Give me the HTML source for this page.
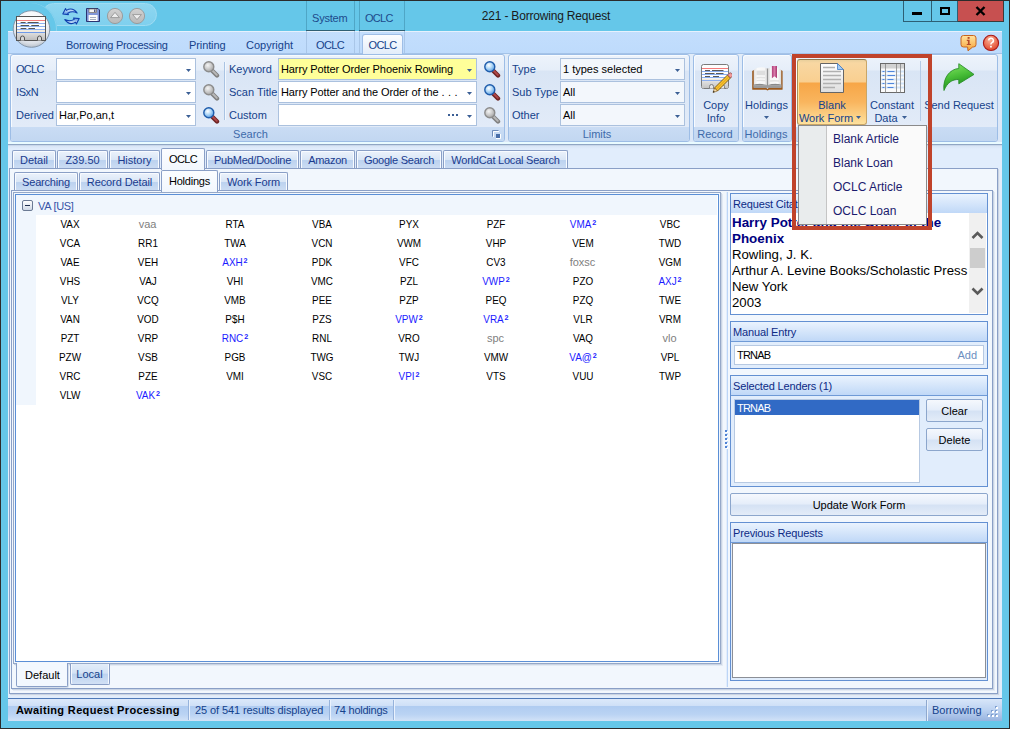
<!DOCTYPE html>
<html><head><meta charset="utf-8"><style>
html,body{margin:0;padding:0;width:1010px;height:729px;overflow:hidden;font-family:'Liberation Sans', sans-serif;}
</style></head><body>
<div style="position:absolute;left:0px;top:0px;width:1010px;height:729px;background:#2b2b2b"></div><div style="position:absolute;left:1px;top:1px;width:1008px;height:727px;background:#65c7e9"></div><div style="position:absolute;left:42px;top:3px;width:115px;height:23px;background:linear-gradient(#8ed6f0,#7fd0ee);border:1px solid #9fdcf2;border-radius:12px;box-sizing:border-box"></div><div style="position:absolute;left:5px;top:3px;width:52px;height:52px;border-radius:50%;background:#65c7e9;box-shadow:inset -1px 0 0 #8ad3ee"></div><svg style="position:absolute;left:62px;top:7px" width="18" height="18" viewBox="0 0 18 18">
<defs><linearGradient id="rg" x1="0" y1="0" x2="0" y2="1"><stop offset="0" stop-color="#e8f4ff"/><stop offset="1" stop-color="#4f8fe0"/></linearGradient></defs>
<g id="ra"><path d="M0.8 7 L3.6 1.6 L4.4 3.4 C8 1.2 12 1.8 15.2 6 C12 4.4 8.5 4.6 5.8 6.2 L6.4 7.6 Z" fill="url(#rg)" stroke="#0f3fae" stroke-width="1.1" stroke-linejoin="round"/></g>
<g transform="rotate(180 9 9.3)"><path d="M0.8 7 L3.6 1.6 L4.4 3.4 C8 1.2 12 1.8 15.2 6 C12 4.4 8.5 4.6 5.8 6.2 L6.4 7.6 Z" fill="url(#rg)" stroke="#0f3fae" stroke-width="1.1" stroke-linejoin="round"/></g>
</svg><svg style="position:absolute;left:86px;top:8px" width="14" height="14" viewBox="0 0 14 14">
<path d="M0.5 0.5 H12 L13.5 2 V13.5 H0.5 Z" fill="#8196d8" stroke="#2a3470"/>
<rect x="3" y="1" width="7.5" height="3.6" fill="#f4f4f4" stroke="#6b5e4a" stroke-width="0.6"/>
<rect x="8.2" y="1.5" width="1.2" height="2.5" fill="#2a3470"/>
<rect x="2.6" y="7" width="9" height="6" fill="#fbfbfb"/>
<path d="M4 9.5h6M4 11.5h6" stroke="#9aa4b8" stroke-width="0.9"/>
</svg><svg style="position:absolute;left:106px;top:7px" width="18" height="18" viewBox="0 0 18 18"><defs><linearGradient id="qg" x1="0" y1="0" x2="0" y2="1"><stop offset="0" stop-color="#d2d2d2"/><stop offset="1" stop-color="#b8b8b8"/></linearGradient></defs><circle cx="9" cy="9" r="7.6" fill="url(#qg)" stroke="#979797" stroke-width="0.9"/><path d="M4.6 10.6 L9 5.4 L13.4 10.6 Z" fill="#ededed" stroke="#8e8e8e" stroke-width="0.8" stroke-linejoin="round"/></svg><svg style="position:absolute;left:128px;top:7px" width="18" height="18" viewBox="0 0 18 18"><circle cx="9" cy="9" r="7.6" fill="url(#qg)" stroke="#979797" stroke-width="0.9"/><path d="M4.6 7.6 L9 12.6 L13.4 7.6 Z" fill="#ededed" stroke="#8e8e8e" stroke-width="0.8" stroke-linejoin="round"/></svg><div style="position:absolute;left:446.0px;top:7px;height:18px;line-height:18px;font-size:12px;color:#1a1a1a;font-weight:400;white-space:nowrap;letter-spacing:-0.19px;width:200px;text-align:center;">221 - Borrowing Request</div><div style="position:absolute;left:306px;top:1px;width:1px;height:52px;background:#4fa6c6"></div><div style="position:absolute;left:354px;top:1px;width:1px;height:52px;background:#4fa6c6"></div><div style="position:absolute;left:306px;top:30px;width:49px;height:1px;background:#2f5f73"></div><div style="position:absolute;left:312px;top:10px;height:17px;line-height:17px;font-size:11px;color:#1d4a8c;font-weight:400;white-space:nowrap;letter-spacing:-0.2px;">System</div><div style="position:absolute;left:359px;top:1px;width:1px;height:52px;background:#4fa6c6"></div><div style="position:absolute;left:404px;top:1px;width:1px;height:52px;background:#4fa6c6"></div><div style="position:absolute;left:359px;top:30px;width:46px;height:1px;background:#2f5f73"></div><div style="position:absolute;left:365px;top:10px;height:17px;line-height:17px;font-size:11px;color:#1d4a8c;font-weight:400;white-space:nowrap;letter-spacing:-0.7px;">OCLC</div><div style="position:absolute;left:903px;top:1px;width:101px;height:21px;border:1px solid #2d5f74;border-top:none;box-sizing:border-box;background:#65c7e9"></div><div style="position:absolute;left:931px;top:1px;width:1px;height:20px;background:#2d5f74"></div><div style="position:absolute;left:957px;top:1px;width:47px;height:21px;background:#c75050;border:1px solid #3a3a3a;border-top:none;border-left:1px solid #2d5f74;box-sizing:border-box"></div><div style="position:absolute;left:912px;top:12px;width:10px;height:3px;background:#000"></div><div style="position:absolute;left:940px;top:7px;width:10px;height:8px;border:2px solid #000;box-sizing:border-box"></div><svg style="position:absolute;left:975px;top:6px" width="11" height="10" viewBox="0 0 11 10"><path d="M1.5 1 L9.5 9 M9.5 1 L1.5 9" stroke="#000" stroke-width="2.4"/></svg><div style="position:absolute;left:8px;top:31px;width:994px;height:23px;background:linear-gradient(#c3defd,#bedbfc)"></div><div style="position:absolute;left:8px;top:31px;width:994px;height:1px;background:#e6f1fd"></div><div style="position:absolute;left:8px;top:53px;width:994px;height:1px;background:#a4c3e8"></div><div style="position:absolute;left:306px;top:31px;width:1px;height:22px;background:#a9c6e8"></div><div style="position:absolute;left:354px;top:31px;width:1px;height:22px;background:#a9c6e8"></div><div style="position:absolute;left:359px;top:31px;width:1px;height:22px;background:#a9c6e8"></div><div style="position:absolute;left:404px;top:31px;width:1px;height:22px;background:#a9c6e8"></div><div style="position:absolute;left:66px;top:37px;height:17px;line-height:17px;font-size:11px;color:#15428b;font-weight:400;white-space:nowrap;letter-spacing:-0.27px;">Borrowing Processing</div><div style="position:absolute;left:189px;top:37px;height:17px;line-height:17px;font-size:11px;color:#15428b;font-weight:400;white-space:nowrap;letter-spacing:-0.1px;">Printing</div><div style="position:absolute;left:246px;top:37px;height:17px;line-height:17px;font-size:11px;color:#15428b;font-weight:400;white-space:nowrap;">Copyright</div><div style="position:absolute;left:300.0px;top:37px;height:17px;line-height:17px;font-size:11px;color:#15428b;font-weight:400;white-space:nowrap;letter-spacing:-0.7px;width:60px;text-align:center;">OCLC</div><div style="position:absolute;left:362px;top:34px;width:41px;height:20px;background:linear-gradient(#fbfdff,#e3edfa);border:1px solid #9fbee6;border-bottom:none;border-radius:3px 3px 0 0;box-sizing:border-box"></div><div style="position:absolute;left:352.5px;top:37px;height:17px;line-height:17px;font-size:11px;color:#15428b;font-weight:400;white-space:nowrap;letter-spacing:-0.7px;width:60px;text-align:center;">OCLC</div><svg style="position:absolute;left:960px;top:34px" width="18" height="18" viewBox="0 0 18 18">
<defs><linearGradient id="ig" x1="0" y1="0" x2="0" y2="1"><stop offset="0" stop-color="#ffe3a0"/><stop offset="1" stop-color="#f6a236"/></linearGradient>
<radialGradient id="hg" cx="45%" cy="30%" r="70%"><stop offset="0" stop-color="#fbb39a"/><stop offset="1" stop-color="#e0452a"/></radialGradient></defs>
<path d="M3.5 1.5 h10 a2.5 2.5 0 0 1 2.5 2.5 v6.5 a2.5 2.5 0 0 1 -2.5 2.5 h-0.8 L8 16.8 L7.6 13 h-4.1 a2.5 2.5 0 0 1 -2.5 -2.5 v-6.5 a2.5 2.5 0 0 1 2.5 -2.5z" fill="url(#ig)" stroke="#c8641e" stroke-width="1"/>
<rect x="7.6" y="3" width="2" height="1.8" fill="#b54a2a"/><path d="M6.8 5.8h2.8v4.2h1.2v1.1h-4v-1.1h1.1v-3.1h-1.1z" fill="#b54a2a"/>
</svg><svg style="position:absolute;left:982px;top:34px" width="18" height="18" viewBox="0 0 18 18">
<circle cx="9" cy="8.9" r="7.6" fill="url(#hg)" stroke="#a81818" stroke-width="1.1"/>
<path d="M6.6 6.4 a2.4 2.3 0 1 1 3.4 2.2 c-0.9 0.5 -1.1 1 -1.1 2" stroke="#fff" stroke-width="1.5" fill="none"/>
<rect x="8.1" y="11.8" width="1.7" height="1.7" fill="#fff"/>
</svg><svg style="position:absolute;left:11px;top:9px" width="42" height="42" viewBox="0 0 42 42">
<defs><radialGradient id="ab" cx="50%" cy="30%" r="70%"><stop offset="0" stop-color="#ffffff"/><stop offset="0.6" stop-color="#f1f3f6"/><stop offset="0.85" stop-color="#d9dee5"/><stop offset="1" stop-color="#b9c2cc"/></radialGradient>
<linearGradient id="cg" x1="0" y1="0" x2="0" y2="1"><stop offset="0" stop-color="#dedede"/><stop offset="1" stop-color="#bdbdbd"/></linearGradient></defs>
<circle cx="20.5" cy="20" r="18.3" fill="url(#ab)" stroke="#7d8ea3" stroke-width="0.9"/>
<rect x="5.5" y="7.5" width="29" height="24" fill="#fcfcfc" stroke="#555" stroke-width="1"/>
<rect x="6" y="24" width="28" height="7" fill="url(#cg)"/>
<rect x="6" y="21" width="28" height="3" fill="#f1ebe0"/>
<line x1="6" y1="11.5" x2="34" y2="11.5" stroke="#f27c7c" stroke-width="1"/>
<line x1="6" y1="14.5" x2="34" y2="14.5" stroke="#8db0f0" stroke-width="1"/>
<line x1="6" y1="17.5" x2="34" y2="17.5" stroke="#8db0f0" stroke-width="1"/>
<line x1="6" y1="20.5" x2="34" y2="20.5" stroke="#8db0f0" stroke-width="1"/>
<line x1="6" y1="23.5" x2="34" y2="23.5" stroke="#6f9ae8" stroke-width="1"/>
<path d="M9.6 13.5h5M16.6 13.5h11M9.6 16.5h8.5M20.3 16.5h7.7M9.6 19.5h5.7M17.4 19.5h6.6" stroke="#555" stroke-width="1"/>
<path d="M9.5 31.5v-2.5a2 2 0 0 1 4 0v2.5M26.5 31.5v-2.5a2 2 0 0 1 4 0v2.5" stroke="#555" stroke-width="1" fill="#d6d6d6"/>
</svg><div style="position:absolute;left:8px;top:54px;width:994px;height:91px;background:linear-gradient(#e1ecf9,#dbe7f7)"></div><div style="position:absolute;left:8px;top:142px;width:994px;height:2px;background:#e9fbff"></div><div style="position:absolute;left:8px;top:144px;width:994px;height:1px;background:#90a6c4"></div><div style="position:absolute;left:10px;top:54px;width:495px;height:88px;border:1px solid #9dbde6;border-radius:3px;box-sizing:border-box;background:linear-gradient(#edf3fb 0px,#e6eef9 15px,#d9e5f5 16px,#e2ebf8 72px);box-shadow:inset 1px 1px 0 #f7fbff"></div><div style="position:absolute;left:11px;top:127px;width:493px;height:14px;background:linear-gradient(#c9dcf4,#c2d7f1);border-radius:0 0 2px 2px"></div><div style="position:absolute;left:190.5px;top:126px;height:17px;line-height:17px;font-size:11px;color:#3e6aaa;font-weight:400;white-space:nowrap;width:120px;text-align:center;">Search</div><div style="position:absolute;left:508px;top:54px;width:182px;height:88px;border:1px solid #9dbde6;border-radius:3px;box-sizing:border-box;background:linear-gradient(#edf3fb 0px,#e6eef9 15px,#d9e5f5 16px,#e2ebf8 72px);box-shadow:inset 1px 1px 0 #f7fbff"></div><div style="position:absolute;left:509px;top:127px;width:180px;height:14px;background:linear-gradient(#c9dcf4,#c2d7f1);border-radius:0 0 2px 2px"></div><div style="position:absolute;left:537.0px;top:126px;height:17px;line-height:17px;font-size:11px;color:#3e6aaa;font-weight:400;white-space:nowrap;width:120px;text-align:center;">Limits</div><div style="position:absolute;left:693px;top:54px;width:46px;height:88px;border:1px solid #9dbde6;border-radius:3px;box-sizing:border-box;background:linear-gradient(#edf3fb 0px,#e6eef9 15px,#d9e5f5 16px,#e2ebf8 72px);box-shadow:inset 1px 1px 0 #f7fbff"></div><div style="position:absolute;left:694px;top:127px;width:44px;height:14px;background:linear-gradient(#c9dcf4,#c2d7f1);border-radius:0 0 2px 2px"></div><div style="position:absolute;left:655.0px;top:126px;height:17px;line-height:17px;font-size:11px;color:#3e6aaa;font-weight:400;white-space:nowrap;width:120px;text-align:center;">Record</div><div style="position:absolute;left:742px;top:54px;width:50px;height:88px;border:1px solid #9dbde6;border-radius:3px;box-sizing:border-box;background:linear-gradient(#edf3fb 0px,#e6eef9 15px,#d9e5f5 16px,#e2ebf8 72px);box-shadow:inset 1px 1px 0 #f7fbff"></div><div style="position:absolute;left:743px;top:127px;width:48px;height:14px;background:linear-gradient(#c9dcf4,#c2d7f1);border-radius:0 0 2px 2px"></div><div style="position:absolute;left:706.0px;top:126px;height:17px;line-height:17px;font-size:11px;color:#3e6aaa;font-weight:400;white-space:nowrap;width:120px;text-align:center;">Holdings</div><div style="position:absolute;left:795px;top:54px;width:203px;height:88px;border:1px solid #9dbde6;border-radius:3px;box-sizing:border-box;background:linear-gradient(#edf3fb 0px,#e6eef9 15px,#d9e5f5 16px,#e2ebf8 72px);box-shadow:inset 1px 1px 0 #f7fbff"></div><div style="position:absolute;left:796px;top:127px;width:201px;height:14px;background:linear-gradient(#c9dcf4,#c2d7f1);border-radius:0 0 2px 2px"></div><div style="position:absolute;left:16px;top:61px;height:17px;line-height:17px;font-size:11px;color:#15428b;font-weight:400;white-space:nowrap;letter-spacing:-0.7px;">OCLC</div><div style="position:absolute;left:16px;top:84px;height:17px;line-height:17px;font-size:11px;color:#15428b;font-weight:400;white-space:nowrap;letter-spacing:-0.4px;">ISxN</div><div style="position:absolute;left:16px;top:107px;height:17px;line-height:17px;font-size:11px;color:#15428b;font-weight:400;white-space:nowrap;">Derived</div><div style="position:absolute;left:56px;top:58px;width:140px;height:22px;background:#ffffff;border:1px solid #abc1de;box-sizing:border-box"></div><svg style="position:absolute;left:186px;top:69px" width="7" height="4" viewBox="0 0 7 4"><path d="M0 0 h5 L2.5 3z" fill="#3b5f95"/></svg><div style="position:absolute;left:56px;top:81px;width:140px;height:22px;background:#ffffff;border:1px solid #abc1de;box-sizing:border-box"></div><svg style="position:absolute;left:186px;top:92px" width="7" height="4" viewBox="0 0 7 4"><path d="M0 0 h5 L2.5 3z" fill="#3b5f95"/></svg><div style="position:absolute;left:56px;top:104px;width:140px;height:22px;background:#ffffff;border:1px solid #abc1de;box-sizing:border-box"></div><div style="position:absolute;left:59px;top:107px;height:17px;line-height:17px;font-size:11px;color:#000;font-weight:400;white-space:nowrap;">Har,Po,an,t</div><svg style="position:absolute;left:186px;top:115px" width="7" height="4" viewBox="0 0 7 4"><path d="M0 0 h5 L2.5 3z" fill="#3b5f95"/></svg><svg style="position:absolute;left:202px;top:60px" width="18" height="18" viewBox="0 0 18 18">
<defs><radialGradient id="mgg" cx="40%" cy="35%" r="65%"><stop offset="0" stop-color="#f4f4f4"/><stop offset="0.5" stop-color="#cfcfcf"/><stop offset="1" stop-color="#a5a5a5"/></radialGradient></defs>
<path d="M10 10.5 L15 15.5" stroke="#808080" stroke-width="4.4" stroke-linecap="round"/>
<path d="M10.2 10.3 L14.8 14.9" stroke="#b8b8b8" stroke-width="2" stroke-linecap="round"/>
<circle cx="6.8" cy="6.8" r="5" fill="url(#mgg)" stroke="#8c8c8c" stroke-width="1.4"/>
</svg><svg style="position:absolute;left:202px;top:83px" width="18" height="18" viewBox="0 0 18 18">
<defs><radialGradient id="mgg" cx="40%" cy="35%" r="65%"><stop offset="0" stop-color="#f4f4f4"/><stop offset="0.5" stop-color="#cfcfcf"/><stop offset="1" stop-color="#a5a5a5"/></radialGradient></defs>
<path d="M10 10.5 L15 15.5" stroke="#808080" stroke-width="4.4" stroke-linecap="round"/>
<path d="M10.2 10.3 L14.8 14.9" stroke="#b8b8b8" stroke-width="2" stroke-linecap="round"/>
<circle cx="6.8" cy="6.8" r="5" fill="url(#mgg)" stroke="#8c8c8c" stroke-width="1.4"/>
</svg><svg style="position:absolute;left:202px;top:106px" width="18" height="18" viewBox="0 0 18 18">
<defs><radialGradient id="mg" cx="40%" cy="35%" r="65%"><stop offset="0" stop-color="#ffffff"/><stop offset="0.45" stop-color="#b9dcf8"/><stop offset="1" stop-color="#5aa0e4"/></radialGradient></defs>
<path d="M10 10.5 L15 15.5" stroke="#6e2424" stroke-width="4.4" stroke-linecap="round"/>
<path d="M10.2 10.3 L14.8 14.9" stroke="#b04848" stroke-width="2" stroke-linecap="round"/>
<circle cx="6.8" cy="6.8" r="5" fill="url(#mg)" stroke="#1f5cab" stroke-width="1.4"/>
</svg><div style="position:absolute;left:224px;top:62px;width:1px;height:58px;background:#a9c3e3"></div><div style="position:absolute;left:225px;top:62px;width:1px;height:58px;background:#f2f7fd"></div><div style="position:absolute;left:229px;top:61px;height:17px;line-height:17px;font-size:11px;color:#15428b;font-weight:400;white-space:nowrap;">Keyword</div><div style="position:absolute;left:229px;top:84px;height:17px;line-height:17px;font-size:11px;color:#15428b;font-weight:400;white-space:nowrap;">Scan Title</div><div style="position:absolute;left:229px;top:107px;height:17px;line-height:17px;font-size:11px;color:#15428b;font-weight:400;white-space:nowrap;">Custom</div><div style="position:absolute;left:278px;top:58px;width:199px;height:22px;background:#ffff99;border:1px solid #abc1de;box-sizing:border-box"></div><div style="position:absolute;left:281px;top:61px;height:17px;line-height:17px;font-size:11px;color:#000;font-weight:400;white-space:nowrap;"><span style='letter-spacing:-0.1px'>Harry Potter Order Phoenix Rowling</span></div><svg style="position:absolute;left:467px;top:69px" width="7" height="4" viewBox="0 0 7 4"><path d="M0 0 h5 L2.5 3z" fill="#3b5f95"/></svg><div style="position:absolute;left:278px;top:81px;width:199px;height:22px;background:#ffffff;border:1px solid #abc1de;box-sizing:border-box"></div><div style="position:absolute;left:281px;top:84px;height:17px;line-height:17px;font-size:11px;color:#000;font-weight:400;white-space:nowrap;"><span style='letter-spacing:-0.1px'>Harry Potter and the Order of the </span><span style='letter-spacing:3.5px'>...</span></div><svg style="position:absolute;left:467px;top:92px" width="7" height="4" viewBox="0 0 7 4"><path d="M0 0 h5 L2.5 3z" fill="#3b5f95"/></svg><div style="position:absolute;left:278px;top:104px;width:199px;height:22px;background:#ffffff;border:1px solid #abc1de;box-sizing:border-box"></div><svg style="position:absolute;left:467px;top:115px" width="7" height="4" viewBox="0 0 7 4"><path d="M0 0 h5 L2.5 3z" fill="#3b5f95"/></svg><div style="position:absolute;left:448px;top:114px;width:2px;height:2px;background:#3b5f95"></div><div style="position:absolute;left:452px;top:114px;width:2px;height:2px;background:#3b5f95"></div><div style="position:absolute;left:456px;top:114px;width:2px;height:2px;background:#3b5f95"></div><svg style="position:absolute;left:483px;top:60px" width="18" height="18" viewBox="0 0 18 18">
<defs><radialGradient id="mg" cx="40%" cy="35%" r="65%"><stop offset="0" stop-color="#ffffff"/><stop offset="0.45" stop-color="#b9dcf8"/><stop offset="1" stop-color="#5aa0e4"/></radialGradient></defs>
<path d="M10 10.5 L15 15.5" stroke="#6e2424" stroke-width="4.4" stroke-linecap="round"/>
<path d="M10.2 10.3 L14.8 14.9" stroke="#b04848" stroke-width="2" stroke-linecap="round"/>
<circle cx="6.8" cy="6.8" r="5" fill="url(#mg)" stroke="#1f5cab" stroke-width="1.4"/>
</svg><svg style="position:absolute;left:483px;top:83px" width="18" height="18" viewBox="0 0 18 18">
<defs><radialGradient id="mg" cx="40%" cy="35%" r="65%"><stop offset="0" stop-color="#ffffff"/><stop offset="0.45" stop-color="#b9dcf8"/><stop offset="1" stop-color="#5aa0e4"/></radialGradient></defs>
<path d="M10 10.5 L15 15.5" stroke="#6e2424" stroke-width="4.4" stroke-linecap="round"/>
<path d="M10.2 10.3 L14.8 14.9" stroke="#b04848" stroke-width="2" stroke-linecap="round"/>
<circle cx="6.8" cy="6.8" r="5" fill="url(#mg)" stroke="#1f5cab" stroke-width="1.4"/>
</svg><svg style="position:absolute;left:483px;top:106px" width="18" height="18" viewBox="0 0 18 18">
<defs><radialGradient id="mgg" cx="40%" cy="35%" r="65%"><stop offset="0" stop-color="#f4f4f4"/><stop offset="0.5" stop-color="#cfcfcf"/><stop offset="1" stop-color="#a5a5a5"/></radialGradient></defs>
<path d="M10 10.5 L15 15.5" stroke="#808080" stroke-width="4.4" stroke-linecap="round"/>
<path d="M10.2 10.3 L14.8 14.9" stroke="#b8b8b8" stroke-width="2" stroke-linecap="round"/>
<circle cx="6.8" cy="6.8" r="5" fill="url(#mgg)" stroke="#8c8c8c" stroke-width="1.4"/>
</svg><svg style="position:absolute;left:492px;top:130px" width="10" height="10" viewBox="0 0 10 10"><path d="M1.5 7 V1.5 H7" stroke="#fff" fill="none"/><path d="M0.5 6.5 V0.5 H6.5" stroke="#6d8bb8" fill="none"/><path d="M4 4 h4 v4 h-4z" fill="#4a6fa8"/><path d="M4 8.5 H8.5 V4" stroke="#fff" fill="none"/></svg><div style="position:absolute;left:512px;top:61px;height:17px;line-height:17px;font-size:11px;color:#15428b;font-weight:400;white-space:nowrap;">Type</div><div style="position:absolute;left:512px;top:84px;height:17px;line-height:17px;font-size:11px;color:#15428b;font-weight:400;white-space:nowrap;">Sub Type</div><div style="position:absolute;left:512px;top:107px;height:17px;line-height:17px;font-size:11px;color:#15428b;font-weight:400;white-space:nowrap;">Other</div><div style="position:absolute;left:560px;top:58px;width:125px;height:22px;background:#f3f7fc;border:1px solid #abc1de;box-sizing:border-box"></div><div style="position:absolute;left:563px;top:61px;height:17px;line-height:17px;font-size:11px;color:#000;font-weight:400;white-space:nowrap;">1 types selected</div><svg style="position:absolute;left:675px;top:69px" width="7" height="4" viewBox="0 0 7 4"><path d="M0 0 h5 L2.5 3z" fill="#3b5f95"/></svg><div style="position:absolute;left:560px;top:81px;width:125px;height:22px;background:#f3f7fc;border:1px solid #abc1de;box-sizing:border-box"></div><div style="position:absolute;left:563px;top:84px;height:17px;line-height:17px;font-size:11px;color:#000;font-weight:400;white-space:nowrap;">All</div><svg style="position:absolute;left:675px;top:92px" width="7" height="4" viewBox="0 0 7 4"><path d="M0 0 h5 L2.5 3z" fill="#3b5f95"/></svg><div style="position:absolute;left:560px;top:104px;width:125px;height:22px;background:#f3f7fc;border:1px solid #abc1de;box-sizing:border-box"></div><div style="position:absolute;left:563px;top:107px;height:17px;line-height:17px;font-size:11px;color:#000;font-weight:400;white-space:nowrap;">All</div><svg style="position:absolute;left:675px;top:115px" width="7" height="4" viewBox="0 0 7 4"><path d="M0 0 h5 L2.5 3z" fill="#3b5f95"/></svg><svg style="position:absolute;left:700px;top:63px" width="32" height="30" viewBox="0 0 32 30">
<defs><linearGradient id="cig" x1="0" y1="0" x2="0" y2="1"><stop offset="0" stop-color="#e2e2e2"/><stop offset="1" stop-color="#c4c4c4"/></linearGradient></defs>
<rect x="1.5" y="1.5" width="27" height="24" rx="2" fill="#fdfdfd" stroke="#7a7a7a"/>
<rect x="2" y="18" width="26" height="7" fill="url(#cig)"/>
<rect x="2" y="15.5" width="26" height="2.5" fill="#f0ebe2"/>
<path d="M2 5.5h26" stroke="#f47a7a"/>
<path d="M2 8.5h26M2 11.5h26M2 14.5h26M2 17.5h26" stroke="#8aaef0"/>
<path d="M5 7.5h5M12 7.5h11.5M5 10.5h9.5M16 10.5h7.5M5 13.5h5M13 13.5h6" stroke="#5a5a5a" stroke-width="1"/>
<path d="M9.5 25.5v-2a2 2 0 0 1 4 0v2M20.5 25.5v-2a2 2 0 0 1 4 0v2" stroke="#777" stroke-width="0.9" fill="#e6e6e6"/>
<path d="M14.5 25 L27.5 12 L30.5 15 L17.5 28 Z" fill="#f7c62f" stroke="#7a5210" stroke-width="0.9" stroke-linejoin="round"/>
<path d="M16 26.5 L29 13.5" stroke="#e59a1a" stroke-width="1"/>
<path d="M27.5 12 L29 10.5 a1.8 1.8 0 0 1 2.6 0 l0.4 0.4 a1.8 1.8 0 0 1 0 2.6 L30.5 15 Z" fill="#f29a9a" stroke="#8a4a4a" stroke-width="0.8"/>
<path d="M14.5 25 L13 29.5 L17.5 28 Z" fill="#f3d9a8" stroke="#7a5210" stroke-width="0.6"/>
<path d="M13.6 27.8 L13 29.5 L14.8 28.9 Z" fill="#111"/>
</svg><div style="position:absolute;left:686.0px;top:97px;height:17px;line-height:17px;font-size:11px;color:#15428b;font-weight:400;white-space:nowrap;width:60px;text-align:center;">Copy</div><div style="position:absolute;left:686.0px;top:110px;height:17px;line-height:17px;font-size:11px;color:#15428b;font-weight:400;white-space:nowrap;width:60px;text-align:center;">Info</div><svg style="position:absolute;left:751px;top:65px" width="33" height="26" viewBox="0 0 33 26">
<defs><linearGradient id="bpl" x1="0" y1="0" x2="1" y2="0"><stop offset="0" stop-color="#e2e2e2"/><stop offset="0.25" stop-color="#fafafa"/><stop offset="0.8" stop-color="#f6f6f6"/><stop offset="1" stop-color="#d0d0d0"/></linearGradient>
<linearGradient id="bpr" x1="0" y1="0" x2="1" y2="0"><stop offset="0" stop-color="#d0d0d0"/><stop offset="0.2" stop-color="#f6f6f6"/><stop offset="0.75" stop-color="#fafafa"/><stop offset="1" stop-color="#dcdcdc"/></linearGradient>
<linearGradient id="bth" x1="0" y1="0" x2="0" y2="1"><stop offset="0" stop-color="#6e6e6e"/><stop offset="0.5" stop-color="#a8a8a8"/><stop offset="1" stop-color="#8a8a8a"/></linearGradient>
<linearGradient id="bbm" x1="0" y1="0" x2="1" y2="0"><stop offset="0" stop-color="#b03c78"/><stop offset="0.5" stop-color="#d77aa8"/><stop offset="1" stop-color="#a8366e"/></linearGradient></defs>
<path d="M1.2 6 L2.8 5 L2.8 22.8 L15.2 22.8 L16.5 24 L17.8 22.8 L30.2 22.8 L30.2 5 L31.6 6 L31.6 24.2 Q31.6 24.8 31 24.8 L18 24.8 L16.5 25.6 L15 24.8 L1.8 24.8 Q1.2 24.8 1.2 24.2 Z" fill="#9c5a1e"/>
<path d="M2.6 22.8 L2.6 19.2 Q9 17.6 16.5 19.6 Q24 17.6 30.4 19.2 L30.4 22.8 Z" fill="url(#bth)"/>
<path d="M3 19.6 L3 4.6 Q9 0.6 16.2 3.4 L16.2 20 Q9 17.8 3 19.6 Z" fill="url(#bpl)"/>
<path d="M16.8 3.4 Q24 0.6 30 4.6 L30 19.6 Q24 17.8 16.8 20 Z" fill="url(#bpr)"/>
<path d="M16.5 3.5 V20.5" stroke="#8a8a8a" stroke-width="0.9"/>
<rect x="5.5" y="5.6" width="8.5" height="4.6" fill="#dedede"/>
<path d="M5.5 12.8 Q10 12.3 14 12.8 M5.5 15.6 Q10 15.1 14 15.6 M19 16 Q24 15.5 28 16" stroke="#e2e2e2" stroke-width="1.4" fill="none"/>
<path d="M20.9 1 H26 V13.2 L23.45 11.3 L20.9 13.2 Z" fill="url(#bbm)"/>
</svg><div style="position:absolute;left:731.5px;top:97px;height:17px;line-height:17px;font-size:11px;color:#15428b;font-weight:400;white-space:nowrap;width:70px;text-align:center;">Holdings</div><svg style="position:absolute;left:764px;top:116px" width="7" height="4" viewBox="0 0 7 4"><path d="M0 0 h5 L2.5 3z" fill="#3b5f95"/></svg><div style="position:absolute;left:797px;top:59px;width:70px;height:66px;border:1px solid #c9a668;border-top-color:#8f7a52;border-left-color:#a8915e;border-radius:3px;box-sizing:border-box;background:linear-gradient(#e9cf9c 0px,#f8d7a2 3px,#f9cf90 22px,#f7a647 23px,#f9b55e 42px,#fde19e 64px);box-shadow:inset 1px 0 0 #fde49a"></div><svg style="position:absolute;left:819px;top:62px" width="27" height="32" viewBox="0 0 27 32">
<defs><linearGradient id="dg" x1="0" y1="0" x2="0" y2="1"><stop offset="0" stop-color="#ffffff"/><stop offset="1" stop-color="#dedede"/></linearGradient></defs>
<path d="M1.5 1.5 H18.5 L24.5 7.5 V30.5 H1.5 Z" fill="url(#dg)" stroke="#666" stroke-width="1"/>
<path d="M18.5 1.5 L24.5 7.5 H18.5 Z" fill="#6aa6e8" stroke="#3b78c4" stroke-width="0.7"/>
<path d="M19 2.5 L23.5 7 H19 Z" fill="#a8cdf4"/>
<path d="M4 5.5h12M4 9.5h18M4 13.5h18M4 17.5h18M4 21.5h18M4 25.5h12" stroke="#b0b0b0" stroke-width="1.6"/>
</svg><div style="position:absolute;left:797.0px;top:97px;height:17px;line-height:17px;font-size:11px;color:#15428b;font-weight:400;white-space:nowrap;width:70px;text-align:center;">Blank</div><div style="position:absolute;left:786.0px;top:110px;height:17px;line-height:17px;font-size:11px;color:#15428b;font-weight:400;white-space:nowrap;width:80px;text-align:center;">Work Form</div><svg style="position:absolute;left:856px;top:116px" width="7" height="4" viewBox="0 0 7 4"><path d="M0 0 h5 L2.5 3z" fill="#3b5f95"/></svg><svg style="position:absolute;left:879px;top:62px" width="28" height="32" viewBox="0 0 28 32">
<rect x="1.5" y="1.5" width="24" height="29" fill="#fbfbfb" stroke="#6a6a6a"/>
<rect x="2" y="2" width="23" height="4.5" fill="#d2d2d2"/>
<path d="M2 9.5h23M2 13.5h23M2 17.5h23M2 21.5h23M2 25.5h23" stroke="#d3e5fa" stroke-width="2"/>
<path d="M3.5 9.5h2M8.5 9.5h7M3.5 13.5h2M8.5 13.5h7.5M3.5 17.5h2M8.5 17.5h6M3.5 21.5h2M8.5 21.5h6.5M3.5 25.5h2M8.5 25.5h6" stroke="#4f86dc" stroke-width="1.1"/>
<path d="M6.5 2v28.5M17.5 2v28.5M21.5 2v28.5" stroke="#858585" stroke-width="0.8"/>
</svg><div style="position:absolute;left:857.0px;top:97px;height:17px;line-height:17px;font-size:11px;color:#15428b;font-weight:400;white-space:nowrap;width:70px;text-align:center;">Constant</div><div style="position:absolute;left:851.0px;top:110px;height:17px;line-height:17px;font-size:11px;color:#15428b;font-weight:400;white-space:nowrap;width:70px;text-align:center;">Data</div><svg style="position:absolute;left:902px;top:116px" width="7" height="4" viewBox="0 0 7 4"><path d="M0 0 h5 L2.5 3z" fill="#3b5f95"/></svg><div style="position:absolute;left:920px;top:61px;width:1px;height:60px;background:#b4cbe8"></div><svg style="position:absolute;left:942px;top:63px" width="34" height="29" viewBox="0 0 34 29">
<defs><linearGradient id="ga" x1="0" y1="0" x2="0.3" y2="1"><stop offset="0" stop-color="#8ce86a"/><stop offset="0.5" stop-color="#4cc13a"/><stop offset="1" stop-color="#178a17"/></linearGradient></defs>
<path d="M2 27.5 C0.5 15 8 6 16.8 5.5 L16.8 0.7 L32 11.4 L16.8 20.8 L16.8 16.5 C10 16.2 5 20 2 27.5 Z" fill="url(#ga)" stroke="#2a8f2a" stroke-width="0.9" stroke-linejoin="round"/>
</svg><div style="position:absolute;left:914.0px;top:97px;height:17px;line-height:17px;font-size:11px;color:#15428b;font-weight:400;white-space:nowrap;width:90px;text-align:center;">Send Request</div><div style="position:absolute;left:8px;top:145px;width:994px;height:553px;background:linear-gradient(#bccbe0 0px,#d8e5f6 1px,#e1edfc 4px,#e1edfc 100%)"></div><div style="position:absolute;left:9px;top:168px;width:989px;height:526px;border:1px solid #8a9fc6;box-sizing:border-box;background:#f2f7fd;box-shadow:1px 1px 0 #c9d4e4,2px 2px 0 #e3eaf4"></div><div style="position:absolute;left:12px;top:150px;width:44px;height:18px;background:linear-gradient(#ecf2fb 0%,#d9e6f6 52%,#bcd2ef 56%,#cbdcf3 100%);border:1px solid #8a9fc6;border-bottom:none;border-radius:2px 2px 0 0;box-sizing:border-box;box-shadow:inset 1px 1px 0 #f8fbff,inset -1px 0 0 #f8fbff"></div><div style="position:absolute;left:2.0px;top:152px;height:17px;line-height:17px;font-size:11px;color:#1a3b8e;font-weight:400;white-space:nowrap;width:64px;text-align:center;">Detail</div><div style="position:absolute;left:57px;top:150px;width:51px;height:18px;background:linear-gradient(#ecf2fb 0%,#d9e6f6 52%,#bcd2ef 56%,#cbdcf3 100%);border:1px solid #8a9fc6;border-bottom:none;border-radius:2px 2px 0 0;box-sizing:border-box;box-shadow:inset 1px 1px 0 #f8fbff,inset -1px 0 0 #f8fbff"></div><div style="position:absolute;left:47.0px;top:152px;height:17px;line-height:17px;font-size:11px;color:#1a3b8e;font-weight:400;white-space:nowrap;width:71px;text-align:center;">Z39.50</div><div style="position:absolute;left:109px;top:150px;width:51px;height:18px;background:linear-gradient(#ecf2fb 0%,#d9e6f6 52%,#bcd2ef 56%,#cbdcf3 100%);border:1px solid #8a9fc6;border-bottom:none;border-radius:2px 2px 0 0;box-sizing:border-box;box-shadow:inset 1px 1px 0 #f8fbff,inset -1px 0 0 #f8fbff"></div><div style="position:absolute;left:99.0px;top:152px;height:17px;line-height:17px;font-size:11px;color:#1a3b8e;font-weight:400;white-space:nowrap;width:71px;text-align:center;">History</div><div style="position:absolute;left:206px;top:150px;width:93px;height:18px;background:linear-gradient(#ecf2fb 0%,#d9e6f6 52%,#bcd2ef 56%,#cbdcf3 100%);border:1px solid #8a9fc6;border-bottom:none;border-radius:2px 2px 0 0;box-sizing:border-box;box-shadow:inset 1px 1px 0 #f8fbff,inset -1px 0 0 #f8fbff"></div><div style="position:absolute;left:196.0px;top:152px;height:17px;line-height:17px;font-size:11px;color:#1a3b8e;font-weight:400;white-space:nowrap;letter-spacing:-0.26px;width:113px;text-align:center;">PubMed/Docline</div><div style="position:absolute;left:300px;top:150px;width:55px;height:18px;background:linear-gradient(#ecf2fb 0%,#d9e6f6 52%,#bcd2ef 56%,#cbdcf3 100%);border:1px solid #8a9fc6;border-bottom:none;border-radius:2px 2px 0 0;box-sizing:border-box;box-shadow:inset 1px 1px 0 #f8fbff,inset -1px 0 0 #f8fbff"></div><div style="position:absolute;left:290.0px;top:152px;height:17px;line-height:17px;font-size:11px;color:#1a3b8e;font-weight:400;white-space:nowrap;letter-spacing:-0.3px;width:75px;text-align:center;">Amazon</div><div style="position:absolute;left:356px;top:150px;width:86px;height:18px;background:linear-gradient(#ecf2fb 0%,#d9e6f6 52%,#bcd2ef 56%,#cbdcf3 100%);border:1px solid #8a9fc6;border-bottom:none;border-radius:2px 2px 0 0;box-sizing:border-box;box-shadow:inset 1px 1px 0 #f8fbff,inset -1px 0 0 #f8fbff"></div><div style="position:absolute;left:346.0px;top:152px;height:17px;line-height:17px;font-size:11px;color:#1a3b8e;font-weight:400;white-space:nowrap;letter-spacing:-0.25px;width:106px;text-align:center;">Google Search</div><div style="position:absolute;left:443px;top:150px;width:125px;height:18px;background:linear-gradient(#ecf2fb 0%,#d9e6f6 52%,#bcd2ef 56%,#cbdcf3 100%);border:1px solid #8a9fc6;border-bottom:none;border-radius:2px 2px 0 0;box-sizing:border-box;box-shadow:inset 1px 1px 0 #f8fbff,inset -1px 0 0 #f8fbff"></div><div style="position:absolute;left:433.0px;top:152px;height:17px;line-height:17px;font-size:11px;color:#1a3b8e;font-weight:400;white-space:nowrap;letter-spacing:-0.22px;width:145px;text-align:center;">WorldCat Local Search</div><div style="position:absolute;left:161px;top:148px;width:44px;height:22px;background:linear-gradient(#fbfdff,#f2f7fd);border:1px solid #8a9fc6;border-bottom:none;border-radius:2px 2px 0 0;box-sizing:border-box"></div><div style="position:absolute;left:151.0px;top:151px;height:17px;line-height:17px;font-size:11px;color:#000;font-weight:400;white-space:nowrap;letter-spacing:-0.7px;width:64px;text-align:center;">OCLC</div><div style="position:absolute;left:11px;top:190px;width:982px;height:499px;border:1px solid #8a9fc6;box-sizing:border-box;background:#f2f7fd;box-shadow:1px 1px 0 #c9d4e4,2px 2px 0 #e3eaf4"></div><div style="position:absolute;left:14px;top:172px;width:64px;height:18px;background:linear-gradient(#ecf2fb 0%,#d9e6f6 52%,#bcd2ef 56%,#cbdcf3 100%);border:1px solid #8a9fc6;border-bottom:none;border-radius:2px 2px 0 0;box-sizing:border-box;box-shadow:inset 1px 1px 0 #f8fbff,inset -1px 0 0 #f8fbff"></div><div style="position:absolute;left:4.0px;top:174px;height:17px;line-height:17px;font-size:11px;color:#1a3b8e;font-weight:400;white-space:nowrap;letter-spacing:-0.18px;width:84px;text-align:center;">Searching</div><div style="position:absolute;left:79px;top:172px;width:81px;height:18px;background:linear-gradient(#ecf2fb 0%,#d9e6f6 52%,#bcd2ef 56%,#cbdcf3 100%);border:1px solid #8a9fc6;border-bottom:none;border-radius:2px 2px 0 0;box-sizing:border-box;box-shadow:inset 1px 1px 0 #f8fbff,inset -1px 0 0 #f8fbff"></div><div style="position:absolute;left:69.0px;top:174px;height:17px;line-height:17px;font-size:11px;color:#1a3b8e;font-weight:400;white-space:nowrap;letter-spacing:-0.1px;width:101px;text-align:center;">Record Detail</div><div style="position:absolute;left:219px;top:172px;width:69px;height:18px;background:linear-gradient(#ecf2fb 0%,#d9e6f6 52%,#bcd2ef 56%,#cbdcf3 100%);border:1px solid #8a9fc6;border-bottom:none;border-radius:2px 2px 0 0;box-sizing:border-box;box-shadow:inset 1px 1px 0 #f8fbff,inset -1px 0 0 #f8fbff"></div><div style="position:absolute;left:209.0px;top:174px;height:17px;line-height:17px;font-size:11px;color:#1a3b8e;font-weight:400;white-space:nowrap;letter-spacing:-0.15px;width:89px;text-align:center;">Work Form</div><div style="position:absolute;left:161px;top:170px;width:57px;height:22px;background:linear-gradient(#fbfdff,#f2f7fd);border:1px solid #8a9fc6;border-bottom:none;border-radius:2px 2px 0 0;box-sizing:border-box"></div><div style="position:absolute;left:151.0px;top:173px;height:17px;line-height:17px;font-size:11px;color:#000;font-weight:400;white-space:nowrap;letter-spacing:-0.22px;width:77px;text-align:center;">Holdings</div><div style="position:absolute;left:13px;top:192px;width:708px;height:472px;border:1px solid #95a8c8;box-sizing:border-box;background:#f2f7fd;box-shadow:1px 1px 0 #c9d4e4,2px 2px 0 #e3eaf4"></div><div style="position:absolute;left:15px;top:194px;width:704px;height:468px;border:1px solid #5b8fd6;box-sizing:border-box;background:#ffffff"></div><div style="position:absolute;left:16px;top:195px;width:701px;height:20px;background:#f0f6fd"></div><div style="position:absolute;left:16px;top:215px;width:20px;height:190px;background:#f0f6fd"></div><div style="position:absolute;left:22px;top:200px;width:11px;height:11px;border:1px solid #6b7a94;border-radius:2px;box-sizing:border-box;background:linear-gradient(#ffffff,#cfd8e6)"></div><div style="position:absolute;left:25px;top:205px;width:5px;height:1px;background:#1f2f4f"></div><div style="position:absolute;left:38px;top:198px;height:17px;line-height:17px;font-size:11px;color:#3654a8;font-weight:400;white-space:nowrap;letter-spacing:-0.3px;">VA [US]</div><div style="position:absolute;left:30.0px;top:216px;height:17px;line-height:17px;font-size:11px;color:#000000;font-weight:400;white-space:nowrap;transform:scaleX(0.9);transform-origin:center center;width:80px;text-align:center;">VAX</div><div style="position:absolute;left:107.5px;top:216px;height:17px;line-height:17px;font-size:11px;color:#808080;font-weight:400;white-space:nowrap;width:80px;text-align:center;">vaa</div><div style="position:absolute;left:194.5px;top:216px;height:17px;line-height:17px;font-size:11px;color:#000000;font-weight:400;white-space:nowrap;transform:scaleX(0.9);transform-origin:center center;width:80px;text-align:center;">RTA</div><div style="position:absolute;left:281.5px;top:216px;height:17px;line-height:17px;font-size:11px;color:#000000;font-weight:400;white-space:nowrap;transform:scaleX(0.9);transform-origin:center center;width:80px;text-align:center;">VBA</div><div style="position:absolute;left:368.5px;top:216px;height:17px;line-height:17px;font-size:11px;color:#000000;font-weight:400;white-space:nowrap;transform:scaleX(0.9);transform-origin:center center;width:80px;text-align:center;">PYX</div><div style="position:absolute;left:455.5px;top:216px;height:17px;line-height:17px;font-size:11px;color:#000000;font-weight:400;white-space:nowrap;transform:scaleX(0.9);transform-origin:center center;width:80px;text-align:center;">PZF</div><div style="position:absolute;left:542.5px;top:216px;height:17px;line-height:17px;font-size:11px;color:#1a1aff;font-weight:400;white-space:nowrap;transform:scaleX(0.9);transform-origin:center center;width:80px;text-align:center;">VMA<span style="font-size:8px;font-weight:700;position:relative;top:-3px;margin-left:1px;letter-spacing:0">2</span></div><div style="position:absolute;left:629.5px;top:216px;height:17px;line-height:17px;font-size:11px;color:#000000;font-weight:400;white-space:nowrap;transform:scaleX(0.9);transform-origin:center center;width:80px;text-align:center;">VBC</div><div style="position:absolute;left:30.0px;top:235px;height:17px;line-height:17px;font-size:11px;color:#000000;font-weight:400;white-space:nowrap;transform:scaleX(0.9);transform-origin:center center;width:80px;text-align:center;">VCA</div><div style="position:absolute;left:107.5px;top:235px;height:17px;line-height:17px;font-size:11px;color:#000000;font-weight:400;white-space:nowrap;transform:scaleX(0.9);transform-origin:center center;width:80px;text-align:center;">RR1</div><div style="position:absolute;left:194.5px;top:235px;height:17px;line-height:17px;font-size:11px;color:#000000;font-weight:400;white-space:nowrap;transform:scaleX(0.9);transform-origin:center center;width:80px;text-align:center;">TWA</div><div style="position:absolute;left:281.5px;top:235px;height:17px;line-height:17px;font-size:11px;color:#000000;font-weight:400;white-space:nowrap;transform:scaleX(0.9);transform-origin:center center;width:80px;text-align:center;">VCN</div><div style="position:absolute;left:368.5px;top:235px;height:17px;line-height:17px;font-size:11px;color:#000000;font-weight:400;white-space:nowrap;transform:scaleX(0.9);transform-origin:center center;width:80px;text-align:center;">VWM</div><div style="position:absolute;left:455.5px;top:235px;height:17px;line-height:17px;font-size:11px;color:#000000;font-weight:400;white-space:nowrap;transform:scaleX(0.9);transform-origin:center center;width:80px;text-align:center;">VHP</div><div style="position:absolute;left:542.5px;top:235px;height:17px;line-height:17px;font-size:11px;color:#000000;font-weight:400;white-space:nowrap;transform:scaleX(0.9);transform-origin:center center;width:80px;text-align:center;">VEM</div><div style="position:absolute;left:629.5px;top:235px;height:17px;line-height:17px;font-size:11px;color:#000000;font-weight:400;white-space:nowrap;transform:scaleX(0.9);transform-origin:center center;width:80px;text-align:center;">TWD</div><div style="position:absolute;left:30.0px;top:254px;height:17px;line-height:17px;font-size:11px;color:#000000;font-weight:400;white-space:nowrap;transform:scaleX(0.9);transform-origin:center center;width:80px;text-align:center;">VAE</div><div style="position:absolute;left:107.5px;top:254px;height:17px;line-height:17px;font-size:11px;color:#000000;font-weight:400;white-space:nowrap;transform:scaleX(0.9);transform-origin:center center;width:80px;text-align:center;">VEH</div><div style="position:absolute;left:194.5px;top:254px;height:17px;line-height:17px;font-size:11px;color:#1a1aff;font-weight:400;white-space:nowrap;transform:scaleX(0.9);transform-origin:center center;width:80px;text-align:center;">AXH<span style="font-size:8px;font-weight:700;position:relative;top:-3px;margin-left:1px;letter-spacing:0">2</span></div><div style="position:absolute;left:281.5px;top:254px;height:17px;line-height:17px;font-size:11px;color:#000000;font-weight:400;white-space:nowrap;transform:scaleX(0.9);transform-origin:center center;width:80px;text-align:center;">PDK</div><div style="position:absolute;left:368.5px;top:254px;height:17px;line-height:17px;font-size:11px;color:#000000;font-weight:400;white-space:nowrap;transform:scaleX(0.9);transform-origin:center center;width:80px;text-align:center;">VFC</div><div style="position:absolute;left:455.5px;top:254px;height:17px;line-height:17px;font-size:11px;color:#000000;font-weight:400;white-space:nowrap;transform:scaleX(0.9);transform-origin:center center;width:80px;text-align:center;">CV3</div><div style="position:absolute;left:542.5px;top:254px;height:17px;line-height:17px;font-size:11px;color:#808080;font-weight:400;white-space:nowrap;width:80px;text-align:center;">foxsc</div><div style="position:absolute;left:629.5px;top:254px;height:17px;line-height:17px;font-size:11px;color:#000000;font-weight:400;white-space:nowrap;transform:scaleX(0.9);transform-origin:center center;width:80px;text-align:center;">VGM</div><div style="position:absolute;left:30.0px;top:273px;height:17px;line-height:17px;font-size:11px;color:#000000;font-weight:400;white-space:nowrap;transform:scaleX(0.9);transform-origin:center center;width:80px;text-align:center;">VHS</div><div style="position:absolute;left:107.5px;top:273px;height:17px;line-height:17px;font-size:11px;color:#000000;font-weight:400;white-space:nowrap;transform:scaleX(0.9);transform-origin:center center;width:80px;text-align:center;">VAJ</div><div style="position:absolute;left:194.5px;top:273px;height:17px;line-height:17px;font-size:11px;color:#000000;font-weight:400;white-space:nowrap;transform:scaleX(0.9);transform-origin:center center;width:80px;text-align:center;">VHI</div><div style="position:absolute;left:281.5px;top:273px;height:17px;line-height:17px;font-size:11px;color:#000000;font-weight:400;white-space:nowrap;transform:scaleX(0.9);transform-origin:center center;width:80px;text-align:center;">VMC</div><div style="position:absolute;left:368.5px;top:273px;height:17px;line-height:17px;font-size:11px;color:#000000;font-weight:400;white-space:nowrap;transform:scaleX(0.9);transform-origin:center center;width:80px;text-align:center;">PZL</div><div style="position:absolute;left:455.5px;top:273px;height:17px;line-height:17px;font-size:11px;color:#1a1aff;font-weight:400;white-space:nowrap;transform:scaleX(0.9);transform-origin:center center;width:80px;text-align:center;">VWP<span style="font-size:8px;font-weight:700;position:relative;top:-3px;margin-left:1px;letter-spacing:0">2</span></div><div style="position:absolute;left:542.5px;top:273px;height:17px;line-height:17px;font-size:11px;color:#000000;font-weight:400;white-space:nowrap;transform:scaleX(0.9);transform-origin:center center;width:80px;text-align:center;">PZO</div><div style="position:absolute;left:629.5px;top:273px;height:17px;line-height:17px;font-size:11px;color:#1a1aff;font-weight:400;white-space:nowrap;transform:scaleX(0.9);transform-origin:center center;width:80px;text-align:center;">AXJ<span style="font-size:8px;font-weight:700;position:relative;top:-3px;margin-left:1px;letter-spacing:0">2</span></div><div style="position:absolute;left:30.0px;top:292px;height:17px;line-height:17px;font-size:11px;color:#000000;font-weight:400;white-space:nowrap;transform:scaleX(0.9);transform-origin:center center;width:80px;text-align:center;">VLY</div><div style="position:absolute;left:107.5px;top:292px;height:17px;line-height:17px;font-size:11px;color:#000000;font-weight:400;white-space:nowrap;transform:scaleX(0.9);transform-origin:center center;width:80px;text-align:center;">VCQ</div><div style="position:absolute;left:194.5px;top:292px;height:17px;line-height:17px;font-size:11px;color:#000000;font-weight:400;white-space:nowrap;transform:scaleX(0.9);transform-origin:center center;width:80px;text-align:center;">VMB</div><div style="position:absolute;left:281.5px;top:292px;height:17px;line-height:17px;font-size:11px;color:#000000;font-weight:400;white-space:nowrap;transform:scaleX(0.9);transform-origin:center center;width:80px;text-align:center;">PEE</div><div style="position:absolute;left:368.5px;top:292px;height:17px;line-height:17px;font-size:11px;color:#000000;font-weight:400;white-space:nowrap;transform:scaleX(0.9);transform-origin:center center;width:80px;text-align:center;">PZP</div><div style="position:absolute;left:455.5px;top:292px;height:17px;line-height:17px;font-size:11px;color:#000000;font-weight:400;white-space:nowrap;transform:scaleX(0.9);transform-origin:center center;width:80px;text-align:center;">PEQ</div><div style="position:absolute;left:542.5px;top:292px;height:17px;line-height:17px;font-size:11px;color:#000000;font-weight:400;white-space:nowrap;transform:scaleX(0.9);transform-origin:center center;width:80px;text-align:center;">PZQ</div><div style="position:absolute;left:629.5px;top:292px;height:17px;line-height:17px;font-size:11px;color:#000000;font-weight:400;white-space:nowrap;transform:scaleX(0.9);transform-origin:center center;width:80px;text-align:center;">TWE</div><div style="position:absolute;left:30.0px;top:311px;height:17px;line-height:17px;font-size:11px;color:#000000;font-weight:400;white-space:nowrap;transform:scaleX(0.9);transform-origin:center center;width:80px;text-align:center;">VAN</div><div style="position:absolute;left:107.5px;top:311px;height:17px;line-height:17px;font-size:11px;color:#000000;font-weight:400;white-space:nowrap;transform:scaleX(0.9);transform-origin:center center;width:80px;text-align:center;">VOD</div><div style="position:absolute;left:194.5px;top:311px;height:17px;line-height:17px;font-size:11px;color:#000000;font-weight:400;white-space:nowrap;transform:scaleX(0.9);transform-origin:center center;width:80px;text-align:center;">P$H</div><div style="position:absolute;left:281.5px;top:311px;height:17px;line-height:17px;font-size:11px;color:#000000;font-weight:400;white-space:nowrap;transform:scaleX(0.9);transform-origin:center center;width:80px;text-align:center;">PZS</div><div style="position:absolute;left:368.5px;top:311px;height:17px;line-height:17px;font-size:11px;color:#1a1aff;font-weight:400;white-space:nowrap;transform:scaleX(0.9);transform-origin:center center;width:80px;text-align:center;">VPW<span style="font-size:8px;font-weight:700;position:relative;top:-3px;margin-left:1px;letter-spacing:0">2</span></div><div style="position:absolute;left:455.5px;top:311px;height:17px;line-height:17px;font-size:11px;color:#1a1aff;font-weight:400;white-space:nowrap;transform:scaleX(0.9);transform-origin:center center;width:80px;text-align:center;">VRA<span style="font-size:8px;font-weight:700;position:relative;top:-3px;margin-left:1px;letter-spacing:0">2</span></div><div style="position:absolute;left:542.5px;top:311px;height:17px;line-height:17px;font-size:11px;color:#000000;font-weight:400;white-space:nowrap;transform:scaleX(0.9);transform-origin:center center;width:80px;text-align:center;">VLR</div><div style="position:absolute;left:629.5px;top:311px;height:17px;line-height:17px;font-size:11px;color:#000000;font-weight:400;white-space:nowrap;transform:scaleX(0.9);transform-origin:center center;width:80px;text-align:center;">VRM</div><div style="position:absolute;left:30.0px;top:330px;height:17px;line-height:17px;font-size:11px;color:#000000;font-weight:400;white-space:nowrap;transform:scaleX(0.9);transform-origin:center center;width:80px;text-align:center;">PZT</div><div style="position:absolute;left:107.5px;top:330px;height:17px;line-height:17px;font-size:11px;color:#000000;font-weight:400;white-space:nowrap;transform:scaleX(0.9);transform-origin:center center;width:80px;text-align:center;">VRP</div><div style="position:absolute;left:194.5px;top:330px;height:17px;line-height:17px;font-size:11px;color:#1a1aff;font-weight:400;white-space:nowrap;transform:scaleX(0.9);transform-origin:center center;width:80px;text-align:center;">RNC<span style="font-size:8px;font-weight:700;position:relative;top:-3px;margin-left:1px;letter-spacing:0">2</span></div><div style="position:absolute;left:281.5px;top:330px;height:17px;line-height:17px;font-size:11px;color:#000000;font-weight:400;white-space:nowrap;transform:scaleX(0.9);transform-origin:center center;width:80px;text-align:center;">RNL</div><div style="position:absolute;left:368.5px;top:330px;height:17px;line-height:17px;font-size:11px;color:#000000;font-weight:400;white-space:nowrap;transform:scaleX(0.9);transform-origin:center center;width:80px;text-align:center;">VRO</div><div style="position:absolute;left:455.5px;top:330px;height:17px;line-height:17px;font-size:11px;color:#808080;font-weight:400;white-space:nowrap;width:80px;text-align:center;">spc</div><div style="position:absolute;left:542.5px;top:330px;height:17px;line-height:17px;font-size:11px;color:#000000;font-weight:400;white-space:nowrap;transform:scaleX(0.9);transform-origin:center center;width:80px;text-align:center;">VAQ</div><div style="position:absolute;left:629.5px;top:330px;height:17px;line-height:17px;font-size:11px;color:#808080;font-weight:400;white-space:nowrap;width:80px;text-align:center;">vlo</div><div style="position:absolute;left:30.0px;top:349px;height:17px;line-height:17px;font-size:11px;color:#000000;font-weight:400;white-space:nowrap;transform:scaleX(0.9);transform-origin:center center;width:80px;text-align:center;">PZW</div><div style="position:absolute;left:107.5px;top:349px;height:17px;line-height:17px;font-size:11px;color:#000000;font-weight:400;white-space:nowrap;transform:scaleX(0.9);transform-origin:center center;width:80px;text-align:center;">VSB</div><div style="position:absolute;left:194.5px;top:349px;height:17px;line-height:17px;font-size:11px;color:#000000;font-weight:400;white-space:nowrap;transform:scaleX(0.9);transform-origin:center center;width:80px;text-align:center;">PGB</div><div style="position:absolute;left:281.5px;top:349px;height:17px;line-height:17px;font-size:11px;color:#000000;font-weight:400;white-space:nowrap;transform:scaleX(0.9);transform-origin:center center;width:80px;text-align:center;">TWG</div><div style="position:absolute;left:368.5px;top:349px;height:17px;line-height:17px;font-size:11px;color:#000000;font-weight:400;white-space:nowrap;transform:scaleX(0.9);transform-origin:center center;width:80px;text-align:center;">TWJ</div><div style="position:absolute;left:455.5px;top:349px;height:17px;line-height:17px;font-size:11px;color:#000000;font-weight:400;white-space:nowrap;transform:scaleX(0.9);transform-origin:center center;width:80px;text-align:center;">VMW</div><div style="position:absolute;left:542.5px;top:349px;height:17px;line-height:17px;font-size:11px;color:#1a1aff;font-weight:400;white-space:nowrap;transform:scaleX(0.9);transform-origin:center center;width:80px;text-align:center;">VA@<span style="font-size:8px;font-weight:700;position:relative;top:-3px;margin-left:1px;letter-spacing:0">2</span></div><div style="position:absolute;left:629.5px;top:349px;height:17px;line-height:17px;font-size:11px;color:#000000;font-weight:400;white-space:nowrap;transform:scaleX(0.9);transform-origin:center center;width:80px;text-align:center;">VPL</div><div style="position:absolute;left:30.0px;top:368px;height:17px;line-height:17px;font-size:11px;color:#000000;font-weight:400;white-space:nowrap;transform:scaleX(0.9);transform-origin:center center;width:80px;text-align:center;">VRC</div><div style="position:absolute;left:107.5px;top:368px;height:17px;line-height:17px;font-size:11px;color:#000000;font-weight:400;white-space:nowrap;transform:scaleX(0.9);transform-origin:center center;width:80px;text-align:center;">PZE</div><div style="position:absolute;left:194.5px;top:368px;height:17px;line-height:17px;font-size:11px;color:#000000;font-weight:400;white-space:nowrap;transform:scaleX(0.9);transform-origin:center center;width:80px;text-align:center;">VMI</div><div style="position:absolute;left:281.5px;top:368px;height:17px;line-height:17px;font-size:11px;color:#000000;font-weight:400;white-space:nowrap;transform:scaleX(0.9);transform-origin:center center;width:80px;text-align:center;">VSC</div><div style="position:absolute;left:368.5px;top:368px;height:17px;line-height:17px;font-size:11px;color:#1a1aff;font-weight:400;white-space:nowrap;transform:scaleX(0.9);transform-origin:center center;width:80px;text-align:center;">VPI<span style="font-size:8px;font-weight:700;position:relative;top:-3px;margin-left:1px;letter-spacing:0">2</span></div><div style="position:absolute;left:455.5px;top:368px;height:17px;line-height:17px;font-size:11px;color:#000000;font-weight:400;white-space:nowrap;transform:scaleX(0.9);transform-origin:center center;width:80px;text-align:center;">VTS</div><div style="position:absolute;left:542.5px;top:368px;height:17px;line-height:17px;font-size:11px;color:#000000;font-weight:400;white-space:nowrap;transform:scaleX(0.9);transform-origin:center center;width:80px;text-align:center;">VUU</div><div style="position:absolute;left:629.5px;top:368px;height:17px;line-height:17px;font-size:11px;color:#000000;font-weight:400;white-space:nowrap;transform:scaleX(0.9);transform-origin:center center;width:80px;text-align:center;">TWP</div><div style="position:absolute;left:30.0px;top:387px;height:17px;line-height:17px;font-size:11px;color:#000000;font-weight:400;white-space:nowrap;transform:scaleX(0.9);transform-origin:center center;width:80px;text-align:center;">VLW</div><div style="position:absolute;left:107.5px;top:387px;height:17px;line-height:17px;font-size:11px;color:#1a1aff;font-weight:400;white-space:nowrap;transform:scaleX(0.9);transform-origin:center center;width:80px;text-align:center;">VAK<span style="font-size:8px;font-weight:700;position:relative;top:-3px;margin-left:1px;letter-spacing:0">2</span></div><div style="position:absolute;left:727px;top:192px;width:1px;height:495px;background:#bcd5f6"></div><div style="position:absolute;left:726px;top:192px;width:1px;height:495px;background:#e2edfc"></div><div style="position:absolute;left:725px;top:430px;width:2px;height:2px;background:#4f82d4;box-shadow:1px 1px 0 #ffffff"></div><div style="position:absolute;left:725px;top:434px;width:2px;height:2px;background:#4f82d4;box-shadow:1px 1px 0 #ffffff"></div><div style="position:absolute;left:725px;top:438px;width:2px;height:2px;background:#4f82d4;box-shadow:1px 1px 0 #ffffff"></div><div style="position:absolute;left:725px;top:442px;width:2px;height:2px;background:#4f82d4;box-shadow:1px 1px 0 #ffffff"></div><div style="position:absolute;left:725px;top:446px;width:2px;height:2px;background:#4f82d4;box-shadow:1px 1px 0 #ffffff"></div><div style="position:absolute;left:730px;top:193px;width:258px;height:122px;border:1px solid #6390d2;box-sizing:border-box;background:#e1edfc"></div><div style="position:absolute;left:731px;top:194px;width:256px;height:20px;background:linear-gradient(#eaf3fe,#c0d8f7);border-bottom:1px solid #6f9ad6;box-sizing:border-box"></div><div style="position:absolute;left:733px;top:196px;height:17px;line-height:17px;font-size:11px;color:#0d2a85;font-weight:400;white-space:nowrap;letter-spacing:-0.15px;">Request Citation</div><div style="position:absolute;left:731px;top:213px;width:256px;height:101px;background:#ffffff"></div><div style="position:absolute;left:732px;top:213px;height:19.4px;line-height:19.4px;font-size:13.4px;color:#000080;font-weight:700;white-space:nowrap;">Harry Potter and the Order of the</div><div style="position:absolute;left:732px;top:229px;height:19.4px;line-height:19.4px;font-size:13.4px;color:#000080;font-weight:700;white-space:nowrap;">Phoenix</div><div style="position:absolute;left:732px;top:245px;height:19.2px;line-height:19.2px;font-size:13.2px;color:#000000;font-weight:400;white-space:nowrap;">Rowling, J. K.</div><div style="position:absolute;left:732px;top:261px;height:19.2px;line-height:19.2px;font-size:13.2px;color:#000000;font-weight:400;white-space:nowrap;">Arthur A. Levine Books/Scholastic Press</div><div style="position:absolute;left:732px;top:277px;height:19.2px;line-height:19.2px;font-size:13.2px;color:#000000;font-weight:400;white-space:nowrap;">New York</div><div style="position:absolute;left:732px;top:293px;height:19.2px;line-height:19.2px;font-size:13.2px;color:#000000;font-weight:400;white-space:nowrap;">2003</div><div style="position:absolute;left:969px;top:213px;width:17px;height:100px;background:#f0f0f0"></div><div style="position:absolute;left:970px;top:248px;width:15px;height:20px;background:#cdcdcd"></div><svg style="position:absolute;left:970px;top:230px" width="15" height="11" viewBox="0 0 15 11"><path d="M2.5 8 L7.5 3 L12.5 8" stroke="#5a5a5a" stroke-width="2.6" fill="none"/></svg><svg style="position:absolute;left:970px;top:286px" width="15" height="11" viewBox="0 0 15 11"><path d="M2.5 2.5 L7.5 7.5 L12.5 2.5" stroke="#5a5a5a" stroke-width="2.6" fill="none"/></svg><div style="position:absolute;left:730px;top:321px;width:258px;height:48px;border:1px solid #6390d2;box-sizing:border-box;background:#e1edfc"></div><div style="position:absolute;left:731px;top:322px;width:256px;height:20px;background:linear-gradient(#eaf3fe,#c0d8f7);border-bottom:1px solid #6f9ad6;box-sizing:border-box"></div><div style="position:absolute;left:733px;top:324px;height:17px;line-height:17px;font-size:11px;color:#0d2a85;font-weight:400;white-space:nowrap;letter-spacing:-0.15px;">Manual Entry</div><div style="position:absolute;left:734px;top:345px;width:250px;height:20px;background:#fff;border:1px solid #b7c9e2;box-sizing:border-box"></div><div style="position:absolute;left:737px;top:347px;height:17px;line-height:17px;font-size:11px;color:#000;font-weight:400;white-space:nowrap;letter-spacing:-0.8px;">TRNAB</div><div style="position:absolute;left:937px;top:347px;height:17px;line-height:17px;font-size:11px;color:#6d8fbf;font-weight:400;white-space:nowrap;width:40px;text-align:right;">Add</div><div style="position:absolute;left:730px;top:375px;width:258px;height:112px;border:1px solid #6390d2;box-sizing:border-box;background:#e1edfc"></div><div style="position:absolute;left:731px;top:376px;width:256px;height:20px;background:linear-gradient(#eaf3fe,#c0d8f7);border-bottom:1px solid #6f9ad6;box-sizing:border-box"></div><div style="position:absolute;left:733px;top:378px;height:17px;line-height:17px;font-size:11px;color:#0d2a85;font-weight:400;white-space:nowrap;letter-spacing:-0.15px;">Selected Lenders (1)</div><div style="position:absolute;left:734px;top:399px;width:186px;height:84px;background:#fff;border:1px solid #b7c9e2;box-sizing:border-box"></div><div style="position:absolute;left:735px;top:400px;width:184px;height:15px;background:#316ac5"></div><div style="position:absolute;left:737px;top:400px;height:17px;line-height:17px;font-size:11px;color:#ffffff;font-weight:400;white-space:nowrap;letter-spacing:-0.8px;">TRNAB</div><div style="position:absolute;left:926px;top:399px;width:57px;height:23px;border:1px solid #8ca6cc;border-radius:2px;box-sizing:border-box;background:linear-gradient(#f5f8fd 0%,#e6eefa 45%,#d5e2f4 55%,#e3ecf8 100%)"></div><div style="position:absolute;left:926.0px;top:403px;height:17px;line-height:17px;font-size:11px;color:#000;font-weight:400;white-space:nowrap;width:57px;text-align:center;">Clear</div><div style="position:absolute;left:926px;top:428px;width:57px;height:23px;border:1px solid #8ca6cc;border-radius:2px;box-sizing:border-box;background:linear-gradient(#f5f8fd 0%,#e6eefa 45%,#d5e2f4 55%,#e3ecf8 100%)"></div><div style="position:absolute;left:926.0px;top:432px;height:17px;line-height:17px;font-size:11px;color:#000;font-weight:400;white-space:nowrap;width:57px;text-align:center;">Delete</div><div style="position:absolute;left:730px;top:493px;width:258px;height:23px;border:1px solid #8ca6cc;border-radius:2px;box-sizing:border-box;background:linear-gradient(#f5f8fd 0%,#e6eefa 45%,#d5e2f4 55%,#e3ecf8 100%)"></div><div style="position:absolute;left:730.0px;top:497px;height:17px;line-height:17px;font-size:11px;color:#000;font-weight:400;white-space:nowrap;width:258px;text-align:center;">Update Work Form</div><div style="position:absolute;left:730px;top:522px;width:258px;height:159px;border:1px solid #6390d2;box-sizing:border-box;background:#e1edfc"></div><div style="position:absolute;left:731px;top:523px;width:256px;height:20px;background:linear-gradient(#eaf3fe,#c0d8f7);border-bottom:1px solid #6f9ad6;box-sizing:border-box"></div><div style="position:absolute;left:733px;top:525px;height:17px;line-height:17px;font-size:11px;color:#0d2a85;font-weight:400;white-space:nowrap;letter-spacing:-0.15px;">Previous Requests</div><div style="position:absolute;left:732px;top:543px;width:254px;height:135px;background:#fff;border:1px solid #8c8f96;box-sizing:border-box"></div><div style="position:absolute;left:16px;top:663px;width:52px;height:24px;background:#f3f8fe;border:1px solid #8a9fc6;border-top:none;border-radius:0 0 2px 2px;box-sizing:border-box;box-shadow:1px 1px 0 #d5dfec"></div><div style="position:absolute;left:12.5px;top:667px;height:17px;line-height:17px;font-size:11px;color:#000;font-weight:400;white-space:nowrap;width:60px;text-align:center;">Default</div><div style="position:absolute;left:70px;top:664px;width:40px;height:21px;background:linear-gradient(#e3edf9 0%,#d3e2f5 45%,#bcd2ef 52%,#d2e1f5 100%);border:1px solid #8a9fc6;border-top:none;border-radius:0 0 2px 2px;box-sizing:border-box;box-shadow:inset 1px 0 0 #f5f9ff,inset -1px 0 0 #f5f9ff"></div><div style="position:absolute;left:64.5px;top:666px;height:17px;line-height:17px;font-size:11px;color:#15428b;font-weight:400;white-space:nowrap;width:50px;text-align:center;">Local</div><div style="position:absolute;left:8px;top:698px;width:994px;height:1px;background:#4f79b8"></div><div style="position:absolute;left:8px;top:699px;width:994px;height:22px;background:linear-gradient(#dce9fa 0%,#cfe0f7 30%,#b0ccf1 34%,#bad3f3 70%,#d2e2f7 100%)"></div><div style="position:absolute;left:16px;top:702px;height:17px;line-height:17px;font-size:11px;color:#000;font-weight:700;white-space:nowrap;letter-spacing:0.35px;">Awaiting Request Processing</div><div style="position:absolute;left:188px;top:700px;width:1px;height:20px;background:#96b3dc"></div><div style="position:absolute;left:189px;top:700px;width:1px;height:20px;background:#eaf2fd"></div><div style="position:absolute;left:329px;top:700px;width:1px;height:20px;background:#96b3dc"></div><div style="position:absolute;left:330px;top:700px;width:1px;height:20px;background:#eaf2fd"></div><div style="position:absolute;left:393px;top:700px;width:1px;height:20px;background:#96b3dc"></div><div style="position:absolute;left:394px;top:700px;width:1px;height:20px;background:#eaf2fd"></div><div style="position:absolute;left:195px;top:702px;height:17px;line-height:17px;font-size:11px;color:#15428b;font-weight:400;white-space:nowrap;letter-spacing:-0.1px;">25 of 541 results displayed</div><div style="position:absolute;left:334px;top:702px;height:17px;line-height:17px;font-size:11px;color:#15428b;font-weight:400;white-space:nowrap;letter-spacing:-0.25px;">74 holdings</div><div style="position:absolute;left:926px;top:699px;width:76px;height:22px;background:linear-gradient(#d8e6f9 0%,#bcd2f1 50%,#97b3df 100%)"></div><div style="position:absolute;left:926px;top:700px;width:1px;height:21px;background:#8fa9cf"></div><div style="position:absolute;left:927px;top:700px;width:1px;height:21px;background:#e6effb"></div><div style="position:absolute;left:932px;top:702px;height:17px;line-height:17px;font-size:11px;color:#15428b;font-weight:400;white-space:nowrap;">Borrowing</div><div style="position:absolute;left:996px;top:707px;width:2px;height:2px;background:#ffffff;box-shadow:-1px -1px 0 #7f9fcf"></div><div style="position:absolute;left:992px;top:711px;width:2px;height:2px;background:#ffffff;box-shadow:-1px -1px 0 #7f9fcf"></div><div style="position:absolute;left:996px;top:711px;width:2px;height:2px;background:#ffffff;box-shadow:-1px -1px 0 #7f9fcf"></div><div style="position:absolute;left:988px;top:715px;width:2px;height:2px;background:#ffffff;box-shadow:-1px -1px 0 #7f9fcf"></div><div style="position:absolute;left:992px;top:715px;width:2px;height:2px;background:#ffffff;box-shadow:-1px -1px 0 #7f9fcf"></div><div style="position:absolute;left:996px;top:715px;width:2px;height:2px;background:#ffffff;box-shadow:-1px -1px 0 #7f9fcf"></div><div style="position:absolute;left:798px;top:125px;width:129px;height:100px;background:#fafafa;border:1px solid #8a8a8a;box-sizing:border-box"></div><div style="position:absolute;left:799px;top:126px;width:27px;height:98px;background:#e9eced"></div><div style="position:absolute;left:826px;top:126px;width:1px;height:98px;background:#c5c5c5"></div><div style="position:absolute;left:833px;top:130px;height:18px;line-height:18px;font-size:12px;color:#1b1b6e;font-weight:400;white-space:nowrap;">Blank Article</div><div style="position:absolute;left:833px;top:154px;height:18px;line-height:18px;font-size:12px;color:#1b1b6e;font-weight:400;white-space:nowrap;">Blank Loan</div><div style="position:absolute;left:833px;top:178px;height:18px;line-height:18px;font-size:12px;color:#1b1b6e;font-weight:400;white-space:nowrap;">OCLC Article</div><div style="position:absolute;left:833px;top:202px;height:18px;line-height:18px;font-size:12px;color:#1b1b6e;font-weight:400;white-space:nowrap;">OCLC Loan</div><div style="position:absolute;left:792px;top:54px;width:140px;height:176px;border:4px solid #c0432b;box-sizing:border-box"></div>
</body></html>
